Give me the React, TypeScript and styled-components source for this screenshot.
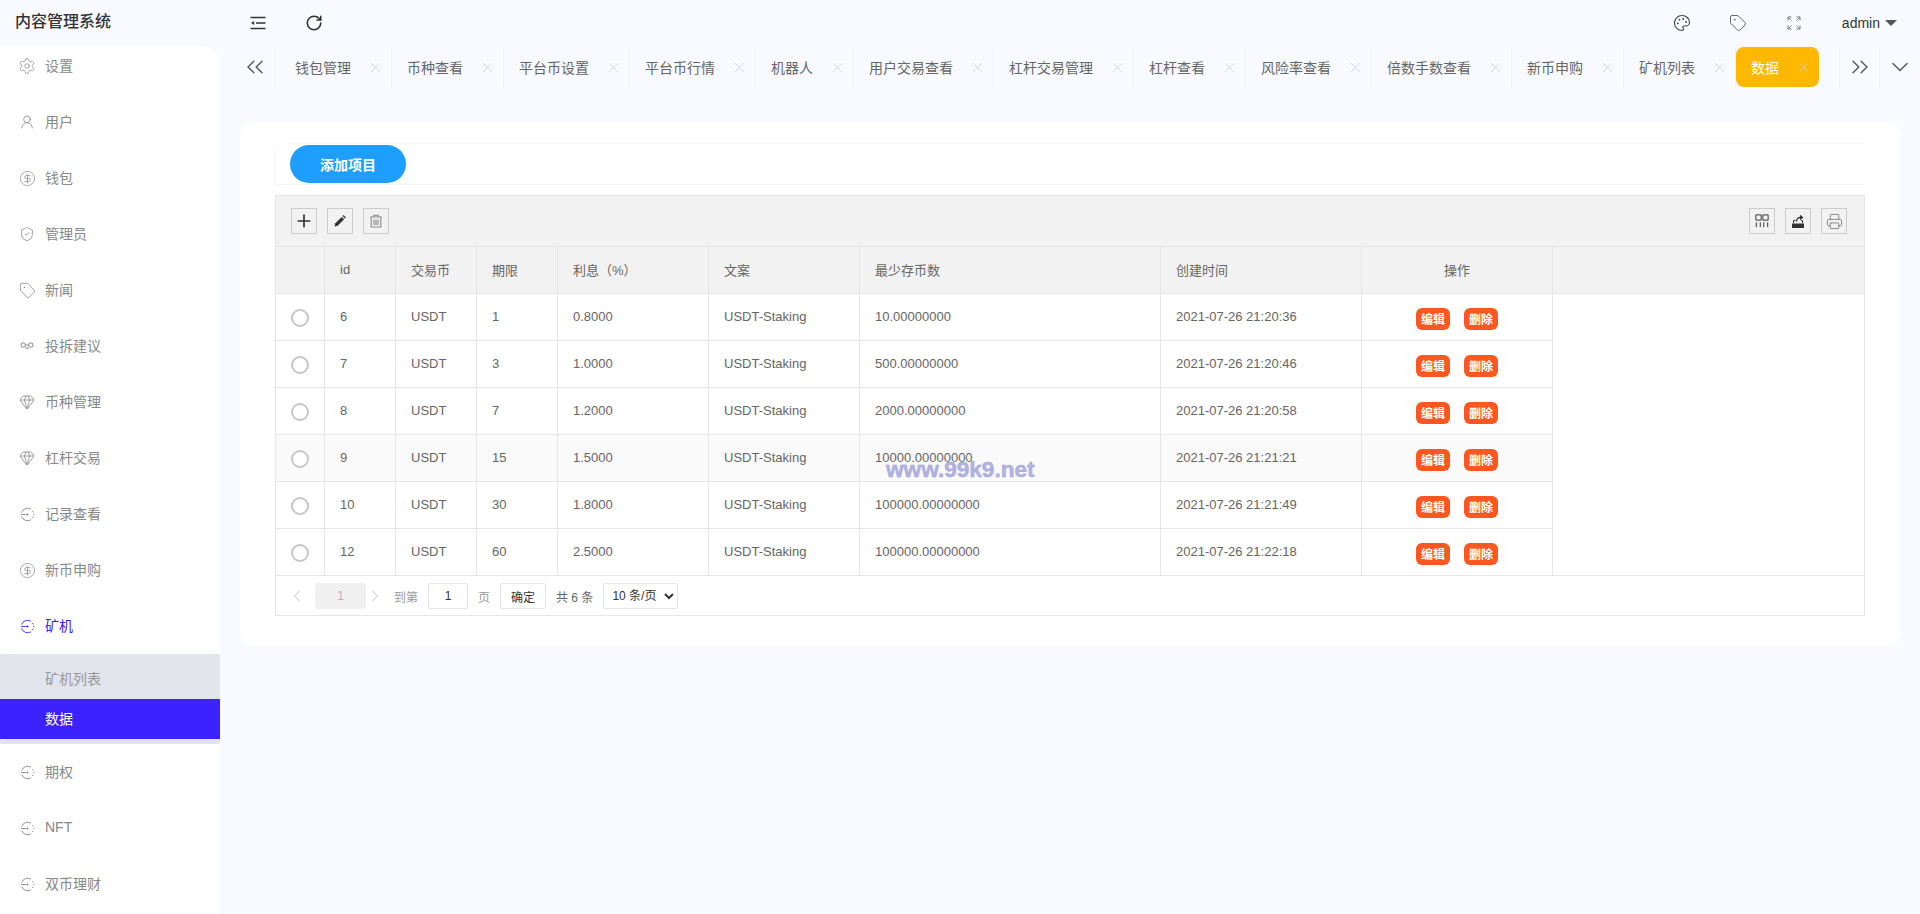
import React from 'react'
import styled, { createGlobalStyle } from 'styled-components'
import {
  ChevronDown,
  ChevronLeft,
  ChevronRight,
  ChevronsLeft,
  ChevronsRight,
  CircleDollarSign,
  Gem,
  Palette,
  Plus,
  Printer,
  RotateCw,
  Settings,
  ShieldCheck,
  Tag,
  UserRound,
  X,
} from 'lucide-react'

const FONT = '"Liberation Sans", "Noto Sans CJK SC", sans-serif'

const GlobalStyle = createGlobalStyle`
  html, body {
    margin: 0;
    padding: 0;
    background: #f8faff;
    font-family: ${FONT};
  }
  * {
    box-sizing: border-box;
  }
`

function LinkIcon() {
  return (
    <svg width="14" height="14" viewBox="0 0 14 14" fill="none" stroke="currentColor" strokeWidth="1">
      <circle cx="3.2" cy="6" r="2.2" />
      <circle cx="10.8" cy="6" r="2.2" />
      <path d="M5 9h4M5.4 6h3.2" />
    </svg>
  )
}

function ScanIcon() {
  return (
    <svg width="15" height="15" viewBox="0 0 15 15" fill="none" stroke="currentColor" strokeWidth="0.9">
      <path d="M1.6 5.6A6.3 6.3 0 0 1 10.9 2.2" />
      <path d="M1.6 9.4A6.3 6.3 0 0 0 10.9 12.8" />
      <path d="M12.4 4l.8 1.3M13.7 6.8v1.4M13.2 9.7l-.8 1.3" />
      <path d="M1 7.5h5.5" />
      <circle cx="7.5" cy="7.5" r="1" fill="currentColor" stroke="none" />
    </svg>
  )
}

function IndentIcon() {
  return (
    <svg width="16" height="14" viewBox="0 0 16 14" fill="none" stroke="#333" strokeWidth="1.6">
      <path d="M0.5 1.5h15M6 7h9.5M0.5 12.5h15" />
      <path d="M4.2 5v4L1 7z" fill="#333" stroke="none" />
    </svg>
  )
}

function FullIcon() {
  return (
    <svg width="18" height="18" viewBox="-2 -2 18 18" fill="none" stroke="#777" strokeWidth="1">
      <path d="M1 4.5V1h3.5M1 1l3.5 3.5" />
      <path d="M13 4.5V1H9.5M13 1L9.5 4.5" />
      <path d="M1 9.5V13h3.5M1 13l3.5-3.5" />
      <path d="M13 9.5V13H9.5M13 13L9.5 9.5" />
    </svg>
  )
}

function PenIcon() {
  return (
    <svg width="14" height="14" viewBox="0 0 14 14" fill="#333">
      <path d="M1.5 12.5l.8-3.2 6.4-6.4 2.4 2.4-6.4 6.4z" />
      <path d="M9.5 2.1l1-1 2.4 2.4-1 1z" />
    </svg>
  )
}

function TrashIcon() {
  return (
    <svg width="14" height="14" viewBox="0 0 14 14" fill="none" stroke="#888" strokeWidth="1.1">
      <path d="M0.8 3h12.4M4.8 3V1.2h4.4V3" />
      <path d="M2.2 3.4v9.6h9.6V3.4" />
      <path d="M5 5.4v5.6M7 5.4v5.6M9 5.4v5.6" />
    </svg>
  )
}

function ColsIcon() {
  return (
    <svg width="14" height="14" viewBox="0 0 16 16" fill="none" stroke="#333" strokeWidth="1.1">
      <path d="M1 1h6v6H1zM9 1h6v6H9z" />
      <path d="M1.5 9.5V15M6 9.5V15M10 9.5V15M14.5 9.5V15" />
    </svg>
  )
}

function ExportIcon() {
  return (
    <svg width="16" height="16" viewBox="0 0 16 16" fill="none" stroke="#333">
      <path d="M3.5 10V7.5h2M11 7.5h1.500V10" strokeWidth="1" />
      <path d="M6.500 8.500C6.500 6 8 4.500 10 4.500" strokeWidth="1.300" />
      <path d="M10 1.800l3.500 2.700L10 7.200z" fill="#333" stroke="none" />
      <path d="M2 10.500h12V15H2z" fill="#333" stroke="none" />
    </svg>
  )
}

const MENU = [
  { label: '设置', icon: <Settings size={18} strokeWidth={1} /> },
  { label: '用户', icon: <UserRound size={16} strokeWidth={1.2} /> },
  { label: '钱包', icon: <CircleDollarSign size={17} strokeWidth={1} /> },
  { label: '管理员', icon: <ShieldCheck size={16} strokeWidth={1.2} /> },
  { label: '新闻', icon: <Tag size={17} strokeWidth={1.1} /> },
  { label: '投拆建议', icon: <LinkIcon /> },
  { label: '币种管理', icon: <Gem size={16} strokeWidth={1.2} /> },
  { label: '杠杆交易', icon: <Gem size={16} strokeWidth={1.2} /> },
  { label: '记录查看', icon: <ScanIcon /> },
  { label: '新币申购', icon: <CircleDollarSign size={17} strokeWidth={1} /> },
]

const MENU_AFTER = ['期权', 'NFT', '双币理财']

const TABS = [
  '钱包管理',
  '币种查看',
  '平台币设置',
  '平台币行情',
  '机器人',
  '用户交易查看',
  '杠杆交易管理',
  '杠杆查看',
  '风险率查看',
  '倍数手数查看',
  '新币申购',
  '矿机列表',
]

const COLS = [49, 71, 81, 81, 151, 151, 301, 201, 191]

const HEAD = ['', 'id', '交易币', '期限', '利息（%）', '文案', '最少存币数', '创建时间']

const ROWS = [
  ['6', 'USDT', '1', '0.8000', 'USDT-Staking', '10.00000000', '2021-07-26 21:20:36'],
  ['7', 'USDT', '3', '1.0000', 'USDT-Staking', '500.00000000', '2021-07-26 21:20:46'],
  ['8', 'USDT', '7', '1.2000', 'USDT-Staking', '2000.00000000', '2021-07-26 21:20:58'],
  ['9', 'USDT', '15', '1.5000', 'USDT-Staking', '10000.00000000', '2021-07-26 21:21:21'],
  ['10', 'USDT', '30', '1.8000', 'USDT-Staking', '100000.00000000', '2021-07-26 21:21:49'],
  ['12', 'USDT', '60', '2.5000', 'USDT-Staking', '100000.00000000', '2021-07-26 21:22:18'],
]

export default function App() {
  return (
    <Page>
      <GlobalStyle />
      <TopBar>
        <Logo>内容管理系统</Logo>
        <TopLeftIcons>
          <IndentIcon />
          <RotateCw size={18} color="#333" strokeWidth={2.1} />
        </TopLeftIcons>
        <TopRight>
          <Palette size={18} color="#444" strokeWidth={1.5} />
          <Tag size={18} color="#555" strokeWidth={1.2} />
          <FullIcon />
          <UserName>admin</UserName>
          <Caret />
        </TopRight>
      </TopBar>

      <Body>
        <Sidebar>
          <Menu>
            {MENU.map((item) => (
              <MenuItem key={item.label}>
                <MenuIcon>{item.icon}</MenuIcon>
                {item.label}
              </MenuItem>
            ))}
            <MenuItem $active>
              <MenuIcon>
                <ScanIcon />
              </MenuIcon>
              矿机
            </MenuItem>
            <SubMenu>
              <SubItem>矿机列表</SubItem>
              <SubItem $active>数据</SubItem>
            </SubMenu>
            {MENU_AFTER.map((label) => (
              <MenuItem key={label}>
                <MenuIcon>
                  <ScanIcon />
                </MenuIcon>
                {label}
              </MenuItem>
            ))}
          </Menu>
        </Sidebar>

        <Main>
          <TabBar>
            <TabNav $width={41}>
              <ChevronsLeft size={28} color="#555" strokeWidth={1.2} />
            </TabNav>
            <TabList>
              {TABS.map((tab, i) => (
                <TabItem key={tab} $first={i === 0}>
                  {tab}
                  <TabClose>
                    <X size={17} strokeWidth={1} />
                  </TabClose>
                </TabItem>
              ))}
              <TabItem $active>
                数据
                <TabClose $active>
                  <X size={17} strokeWidth={1} />
                </TabClose>
              </TabItem>
            </TabList>
            <TabNav $width={41} $left>
              <ChevronsRight size={28} color="#555" strokeWidth={1.2} />
            </TabNav>
            <TabNav $width={40} $plain>
              <ChevronDown size={28} color="#555" strokeWidth={1.2} />
            </TabNav>
          </TabBar>

          <Card>
            <AddRow>
              <AddButton>添加项目</AddButton>
            </AddRow>

            <TableBox>
              <Toolbar>
                <ToolGroup>
                  <ToolButton>
                    <Plus size={20} color="#333" strokeWidth={2} />
                  </ToolButton>
                  <ToolButton>
                    <PenIcon />
                  </ToolButton>
                  <ToolButton>
                    <TrashIcon />
                  </ToolButton>
                </ToolGroup>
                <ToolGroup>
                  <ToolButton>
                    <ColsIcon />
                  </ToolButton>
                  <ToolButton>
                    <ExportIcon />
                  </ToolButton>
                  <ToolButton>
                    <Printer size={17} color="#777" strokeWidth={1.2} />
                  </ToolButton>
                </ToolGroup>
              </Toolbar>

              <HeadRow>
                {HEAD.map((title, i) => (
                  <Cell key={i} $width={COLS[i]}>
                    {title}
                  </Cell>
                ))}
                <Cell $width={COLS[8]} $center>
                  操作
                </Cell>
                <HeadFill />
              </HeadRow>

              {ROWS.map((row, r) => (
                <Row key={row[0]} $hover={r === 3} $last={r === ROWS.length - 1}>
                  <Cell $width={COLS[0]} $center>
                    <Radio />
                  </Cell>
                  {row.map((value, i) => (
                    <Cell key={i} $width={COLS[i + 1]}>
                      {value}
                    </Cell>
                  ))}
                  <Cell $width={COLS[8]} $center>
                    <Actions>
                      <ActionButton>编辑</ActionButton>
                      <ActionButton>删除</ActionButton>
                    </Actions>
                  </Cell>
                </Row>
              ))}

              <Pager>
                <PagerArrow>
                  <ChevronLeft size={20} strokeWidth={1.2} />
                </PagerArrow>
                <PageNumber>1</PageNumber>
                <PagerArrow $next>
                  <ChevronRight size={20} strokeWidth={1.2} />
                </PagerArrow>
                <PagerLabel $gap={9}>到第</PagerLabel>
                <PageInput defaultValue="1" />
                <PagerLabel $gap={10}>页</PagerLabel>
                <PageConfirm>确定</PageConfirm>
                <PagerTotal>共 6 条</PagerTotal>
                <PageSelect defaultValue="10">
                  <option value="10">10 条/页</option>
                  <option value="20">20 条/页</option>
                </PageSelect>
              </Pager>
            </TableBox>
          </Card>
        </Main>
      </Body>

      <Watermark>www.99k9.net</Watermark>
    </Page>
  )
}

const Page = styled.div`
  position: relative;
  width: 1920px;
  height: 914px;
  overflow: hidden;
  background: #f8faff;
`

const TopBar = styled.header`
  display: flex;
  align-items: center;
  height: 46px;
`

const Logo = styled.div`
  width: 220px;
  padding: 0 0 6px 15px;
  font-size: 16px;
  font-weight: 500;
  color: #333;
`

const TopLeftIcons = styled.div`
  display: flex;
  align-items: center;
  gap: 39px;
  margin-left: 30px;
`

const TopRight = styled.div`
  display: flex;
  align-items: center;
  gap: 38px;
  margin-left: auto;
  padding-right: 23px;
`

const UserName = styled.span`
  margin-left: 1px;
  margin-right: -33px;
  font-size: 14px;
  color: #333;
`

const Caret = styled.span`
  width: 0;
  height: 0;
  border-style: solid;
  border-width: 6px 6px 0 6px;
  border-color: #555 transparent transparent transparent;
`

const Body = styled.div`
  display: flex;
  height: 868px;
`

const Sidebar = styled.aside`
  flex: none;
  width: 220px;
  height: 100%;
  overflow: hidden;
  background: #fff;
  border-top-right-radius: 20px;
`

const Menu = styled.nav`
  margin-top: -8px;
`

const MenuItem = styled.div<{ $active?: boolean }>`
  display: flex;
  align-items: center;
  height: 56px;
  padding: 0 0 2px 20px;
  font-size: 14px;
  color: ${({ $active }) => ($active ? '#3c22ff' : '#888')};
`

const MenuIcon = styled.span`
  display: flex;
  align-items: center;
  justify-content: center;
  width: 14px;
  margin: 2px 11px 0 0;

  svg {
    flex: none;
  }
`

const SubMenu = styled.div`
  padding: 5px 0;
  background: #e2e5ec;
  border-radius: 2px;
`

const SubItem = styled.div<{ $active?: boolean }>`
  display: flex;
  align-items: center;
  height: 40px;
  padding: 0 0 2px 45px;
  font-size: 14px;
  color: ${({ $active }) => ($active ? '#fff' : '#999')};
  background: ${({ $active }) => ($active ? '#3c22ff' : 'transparent')};
`

const Main = styled.main`
  flex: 1;
  min-width: 0;
`

const TabBar = styled.div`
  display: flex;
  height: 40px;
  margin: 1px 0 0 15px;
`

const TabNav = styled.div<{ $width: number; $left?: boolean; $plain?: boolean }>`
  flex: none;
  display: flex;
  align-items: center;
  justify-content: center;
  width: ${({ $width }) => $width}px;
  border-right: ${({ $plain }) => ($plain ? 'none' : '1px solid #f3f4f9')};
  border-left: ${({ $left }) => ($left ? '1px solid #f3f4f9' : 'none')};
`

const TabList = styled.div`
  flex: 1;
  display: flex;
  min-width: 0;
`

const TabItem = styled.div<{ $active?: boolean; $first?: boolean }>`
  flex: none;
  display: flex;
  align-items: center;
  height: 40px;
  padding: 0 7px 1px ${({ $first }) => ($first ? 19 : 15)}px;
  font-size: 14px;
  color: ${({ $active }) => ($active ? '#fff' : '#666')};
  background: ${({ $active }) => ($active ? '#ffb800' : 'transparent')};
  border-radius: ${({ $active }) => ($active ? '8px' : '0')};
  border-right: ${({ $active }) => ($active ? 'none' : '1px solid #f3f4f9')};
`

const TabClose = styled.span<{ $active?: boolean }>`
  display: flex;
  align-items: center;
  margin: 1px 0 0 16px;
  color: ${({ $active }) => ($active ? 'rgba(255, 255, 255, 0.6)' : '#c8c8c8')};
`

const Card = styled.section`
  height: 524px;
  margin: 35px 20px 0;
  padding: 21px 35px 0;
  background: #fff;
  border-radius: 14px;
`

const AddRow = styled.div`
  padding: 1px 0 1px 14px;
  border-top: 1px solid #f9f9f9;
  border-left: 1px solid #f6f6f6;
  border-bottom: 1px solid #f6f6f6;
  border-top-left-radius: 10px;
`

const AddButton = styled.button`
  display: block;
  width: 116px;
  height: 38px;
  padding: 0 0 1px;
  border: none;
  border-radius: 19px;
  background: #1e9fff;
  color: #fff;
  font-family: ${FONT};
  font-size: 14px;
  font-weight: 700;
`

const TableBox = styled.div`
  width: 1590px;
  margin-top: 10px;
  border: 1px solid #e6e6e6;
`

const Toolbar = styled.div`
  display: flex;
  align-items: center;
  justify-content: space-between;
  height: 51px;
  padding: 0 17px 0 15px;
  background: #f2f2f2;
  border-bottom: 1px solid #e6e6e6;
`

const ToolGroup = styled.div`
  display: flex;
  gap: 10px;
`

const ToolButton = styled.div`
  display: flex;
  align-items: center;
  justify-content: center;
  width: 26px;
  height: 26px;
  border: 1px solid #ccc;
`

const HeadRow = styled.div`
  display: flex;
  height: 47px;
  background: #f2f2f2;
  border-bottom: 1px solid #e6e6e6;
`

const HeadFill = styled.div`
  flex: 1;
`

const Row = styled.div<{ $hover?: boolean; $last?: boolean }>`
  display: flex;
  width: 1277px;
  height: ${({ $last }) => ($last ? 46 : 47)}px;
  background: ${({ $hover }) => ($hover ? '#fafafa' : '#fff')};
  border-bottom: ${({ $last }) => ($last ? 'none' : '1px solid #e6e6e6')};
`

const Cell = styled.div<{ $width: number; $center?: boolean }>`
  flex: none;
  display: flex;
  align-items: center;
  justify-content: ${({ $center }) => ($center ? 'center' : 'flex-start')};
  width: ${({ $width }) => $width}px;
  padding: ${({ $center }) => ($center ? '0 0 1px' : '0 0 1px 15px')};
  border-right: 1px solid #e6e6e6;
  font-size: 13px;
  color: #666;
  white-space: nowrap;
`

const Radio = styled.span`
  width: 18px;
  height: 18px;
  margin-top: 2px;
  border: 2px solid #c6c6c6;
  border-radius: 50%;
  background: #fff;
`

const Actions = styled.div`
  display: flex;
  gap: 14px;
  margin-top: 4px;
`

const ActionButton = styled.button`
  width: 34px;
  height: 22px;
  padding: 0;
  border: none;
  border-radius: 6px;
  background: #ff5722;
  color: #fff;
  font-family: ${FONT};
  font-size: 12px;
  font-weight: 700;
`

const Pager = styled.div`
  display: flex;
  align-items: center;
  height: 40px;
  padding: 1px 0 0 11px;
  border-top: 1px solid #e6e6e6;
  font-size: 12px;
`

const PagerArrow = styled.span<{ $next?: boolean }>`
  display: flex;
  width: 20px;
  margin-left: ${({ $next }) => ($next ? '-1px' : '0')};
  color: #c4c4c4;
`

const PageNumber = styled.span`
  display: flex;
  align-items: center;
  justify-content: center;
  width: 51px;
  height: 26px;
  margin-left: 8px;
  border-radius: 4px;
  background: #f0f0f0;
  color: #b5b5b5;
`

const PagerLabel = styled.span<{ $gap: number }>`
  margin-left: ${({ $gap }) => $gap}px;
  color: #999;
`

const PageInput = styled.input`
  width: 40px;
  height: 26px;
  margin-left: 10px;
  padding: 0;
  border: 1px solid #e6e6e6;
  border-radius: 2px;
  background: #fff;
  color: #333;
  font-family: ${FONT};
  font-size: 12px;
  text-align: center;
`

const PageConfirm = styled.button`
  width: 46px;
  height: 26px;
  margin-left: 10px;
  padding: 0;
  border: 1px solid #e6e6e6;
  border-radius: 2px;
  background: #fff;
  color: #333;
  font-family: ${FONT};
  font-size: 12px;
`

const PagerTotal = styled.span`
  margin-left: 10px;
  color: #666;
`

const PageSelect = styled.select`
  width: 75px;
  height: 26px;
  margin-left: 10px;
  padding: 0 0 0 4px;
  border: 1px solid #e6e6e6;
  border-radius: 2px;
  background: #fff;
  color: #333;
  font-family: ${FONT};
  font-size: 12px;
`

const Watermark = styled.div`
  position: absolute;
  left: 886px;
  top: 457px;
  font-family: "Liberation Sans", sans-serif;
  font-size: 22.6px;
  font-weight: 700;
  line-height: 26px;
  color: #b3b3e3;
  -webkit-text-stroke: 0.4px #9c9cd2;
  white-space: nowrap;
`
